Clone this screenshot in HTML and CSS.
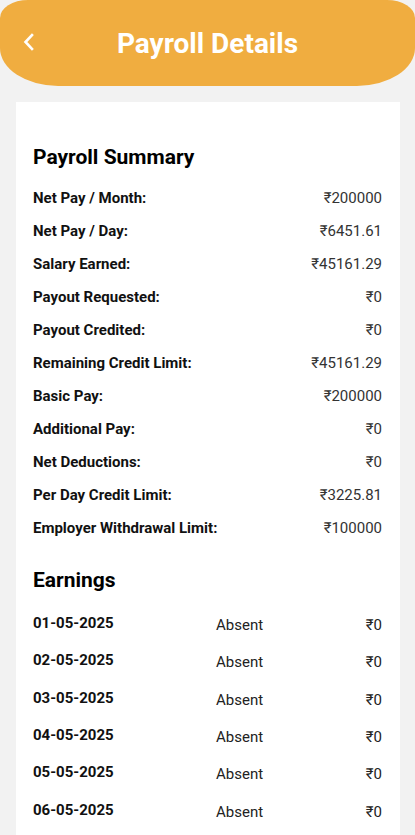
FILE: index.html
```html
<!DOCTYPE html>
<html>
<head>
<meta charset="utf-8">
<link rel="stylesheet" href="styles.css">
</head>
<body>
<header class="topbar">
  <svg class="back" width="14" height="18" viewBox="0 0 14 18"><path d="M10 2 L3.5 9 L10 16" fill="none" stroke="#fff" stroke-width="2.6" stroke-linecap="square"/></svg>
  <h1 class="title">Payroll Details</h1>
</header>
<main class="card">
  <h2 class="section-title">Payroll Summary</h2>
  <div class="summary">
    <div class="row"><span class="label">Net Pay / Month:</span><span class="value">₹200000</span></div>
    <div class="row"><span class="label">Net Pay / Day:</span><span class="value">₹6451.61</span></div>
    <div class="row"><span class="label">Salary Earned:</span><span class="value">₹45161.29</span></div>
    <div class="row"><span class="label">Payout Requested:</span><span class="value">₹0</span></div>
    <div class="row"><span class="label">Payout Credited:</span><span class="value">₹0</span></div>
    <div class="row"><span class="label">Remaining Credit Limit:</span><span class="value">₹45161.29</span></div>
    <div class="row"><span class="label">Basic Pay:</span><span class="value">₹200000</span></div>
    <div class="row"><span class="label">Additional Pay:</span><span class="value">₹0</span></div>
    <div class="row"><span class="label">Net Deductions:</span><span class="value">₹0</span></div>
    <div class="row"><span class="label">Per Day Credit Limit:</span><span class="value">₹3225.81</span></div>
    <div class="row"><span class="label">Employer Withdrawal Limit:</span><span class="value">₹100000</span></div>
  </div>
  <h2 class="section-title earnings-title">Earnings</h2>
  <div class="earnings">
    <div class="erow"><span class="date">01-05-2025</span><span class="status">Absent</span><span class="amt">₹0</span></div>
    <div class="erow"><span class="date">02-05-2025</span><span class="status">Absent</span><span class="amt">₹0</span></div>
    <div class="erow"><span class="date">03-05-2025</span><span class="status">Absent</span><span class="amt">₹0</span></div>
    <div class="erow"><span class="date">04-05-2025</span><span class="status">Absent</span><span class="amt">₹0</span></div>
    <div class="erow"><span class="date">05-05-2025</span><span class="status">Absent</span><span class="amt">₹0</span></div>
    <div class="erow"><span class="date">06-05-2025</span><span class="status">Absent</span><span class="amt">₹0</span></div>
  </div>
</main>
</body>
</html>
```
FILE: styles.css
```css
html, body {
  margin: 0;
  padding: 0;
  background: #f2f2f2;
  font-family: Roboto, "Noto Sans", sans-serif;
  color: #111;
  height: 835px;
  overflow: hidden;
}
.topbar {
  height: 86px;
  background: #f0ad40;
  border-radius: 28px 28px 58px 58px / 18px 18px 38px 38px;
  display: flex;
  align-items: center;
  justify-content: center;
  position: relative;
}
.back {
  position: absolute;
  left: 22px;
  top: 33px;
}
.title {
  margin: 0;
  color: #fff;
  font-size: 28px;
  font-weight: 700;
  letter-spacing: 0;
}
.card {
  background: #fff;
  margin: 16px 15px 0 16px;
  padding: 39px 18px 5px 17px;
}
.section-title {
  margin: 0;
  font-size: 21px;
  font-weight: 700;
  color: #000;
  line-height: 32px;
}
.summary {
  display: flex;
  flex-direction: column;
  margin-top: 8px;
}
.row {
  display: flex;
  justify-content: space-between;
  align-items: center;
  height: 33.1px;
  font-size: 15px;
}
.label {
  font-weight: 700;
  color: #111;
}
.value {
  color: #333;
}
.earnings-title {
  margin-top: 19px;
}
.earnings {
  display: flex;
  flex-direction: column;
  margin-top: 10px;
}
.erow {
  display: grid;
  grid-template-columns: 183px 1fr auto;
  align-items: center;
  height: 37.4px;
  font-size: 15px;
}
.date {
  font-weight: 700;
  color: #111;
  position: relative;
  top: -2px;
}
.status, .amt {
  color: #222;
}
```
